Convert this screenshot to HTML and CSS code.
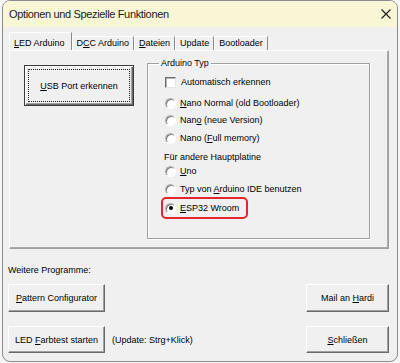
FILE: index.html
```html
<!DOCTYPE html>
<html lang="de">
<head>
    <meta charset="UTF-8">
    <meta name="viewport" content="width=device-width, initial-scale=1.0">
    <title>Optionen und Spezielle Funktionen</title>
    <link rel="stylesheet" href="styles.css">
</head>
<body>
    <div class="window">
        <div class="titlebar">
            <span class="title">Optionen und Spezielle Funktionen</span>
            <svg class="close" width="10" height="10" viewBox="0 0 10 10">
                <path d="M0.5 0.5 L9.5 9.5 M9.5 0.5 L0.5 9.5" stroke="#1b1b1b" stroke-width="1.1" fill="none"/>
            </svg>
        </div>

        <div class="client">
            <div class="tabs">
                <div class="tab active"><u>L</u>ED Arduino</div>
                <div class="tab">D<u>C</u>C Arduino</div>
                <div class="tab"><u>D</u>ateien</div>
                <div class="tab">Update</div>
                <div class="tab">Bootloader</div>
            </div>

            <div class="page">
                <button class="btn default usb"><u>U</u>SB Port erkennen</button>

                <fieldset class="group">
                    <legend>Arduino Typ</legend>
                    <div class="opt gap-6"><span class="check"></span>Automatisch erkennen</div>
                    <div class="opt gap-7"><span class="radio"></span><span><u>N</u>ano Normal (old Bootloader)</span></div>
                    <div class="opt gap-3"><span class="radio"></span><span>Nan<u>o</u> (neue Version)</span></div>
                    <div class="opt"><span class="radio"></span><span>Nano (<u>F</u>ull memory)</span></div>
                    <div class="opt gap-5">Für andere Hauptplatine</div>
                    <div class="opt gap-0"><span class="radio"></span><span><u>U</u>no</span></div>
                    <div class="opt"><span class="radio"></span><span>Typ von <u>A</u>rduino IDE benutzen</span></div>
                    <div class="mark">
                        <div class="opt gap-0"><span class="radio on"></span><span><u>E</u>SP32 Wroom</span></div>
                    </div>
                </fieldset>
            </div>

            <div class="section-label">Weitere Programme:</div>

            <div class="btn-row">
                <button class="btn wide"><u>P</u>attern Configurator</button>
                <button class="btn narrow push"><span>Mail an <u>H</u>ardi</span></button>
            </div>

            <div class="btn-row second">
                <button class="btn wide">LED <u>F</u>arbtest starten</button>
                <span class="hint">(Update: Strg+Klick)</span>
                <button class="btn narrow push"><u>S</u>chließen</button>
            </div>
        </div>
    </div>
</body>
</html>
```

FILE: styles.css
```css
* {
    box-sizing: border-box;
}

body {
    margin: 0;
    background: #f6f6f6;
    font-family: "Liberation Sans", Arial, sans-serif;
    font-size: 9px;
    color: #000;
}

.window {
    margin-left: 2px;
    width: 396px;
    height: 362px;
    border: 1px solid #8c8c8c;
    border-radius: 8px;
    background: #f0f0f0;
    overflow: hidden;
    display: flex;
    flex-direction: column;
}

.titlebar {
    height: 26px;
    flex: none;
    background: #f9f6d6;
    display: flex;
    align-items: center;
    justify-content: space-between;
    padding: 0 6px;
}

.title {
    font-family: "Liberation Sans", Arial, sans-serif;
    font-size: 11px;
    letter-spacing: -0.35px;
    color: #1a1a1a;
}

.client {
    flex: 1;
    padding: 0 8px 0 5px;
    display: flex;
    flex-direction: column;
}

/* tab strip */
.tabs {
    display: flex;
    align-items: flex-end;
    margin: 5px 0 0 1px;
    height: 18px;
}

.tab {
    padding: 0 4px 1px 4px;
    line-height: 12px;
    border-top: 1px solid #fff;
    border-left: 1px solid #fff;
    border-right: 1px solid #8a8a8a;
    white-space: nowrap;
}

.tab.active {
    padding: 4px 6px 1px 4px;
}

.page {
    margin-left: 1px;
    height: 199px;
    border: 1px solid;
    border-color: #fff #a0a0a0 #a0a0a0 #fff;
    box-shadow: inset -1px -1px 0 #a8a8a8;
    display: flex;
    align-items: flex-start;
    padding: 6px 0 0 14px;
}

/* buttons */
.btn {
    font: inherit;
    color: #000;
    background: #f0f0f0;
    border: 1px solid;
    border-color: #fff #6a6a6a #6a6a6a #fff;
    box-shadow: inset -1px -1px 0 #a0a0a0;
    padding: 0;
    height: 28px;
    white-space: nowrap;
}

.btn.default {
    border: 1px solid #3a3a3a;
    box-shadow: inset 1px 1px 0 #fff, inset -1px -1px 0 #6a6a6a, inset -2px -2px 0 #a0a0a0;
    outline: 1px dotted #222;
    outline-offset: -5px;
}

.usb {
    width: 110px;
    height: 41px;
    margin-top: 8px;
}

/* Arduino Typ frame */
.group {
    margin: 0 0 0 13px;
    width: 223px;
    height: 182px;
    border: 1px solid #a0a0a0;
    box-shadow: inset 1px 1px 0 #fff, 1px 1px 0 #fff;
    padding: 0 0 0 16px;
    min-width: 0;
}

.group legend {
    padding: 0 2px;
    margin-left: -5px;
    line-height: 12px;
}

.opt {
    display: flex;
    align-items: center;
    height: 14px;
    line-height: 14px;
    margin-top: 4px;
    white-space: nowrap;
}

.gap-0 { margin-top: 0; }
.gap-3 { margin-top: 3px; }
.gap-5 { margin-top: 5px; }
.gap-6 { margin-top: 6px; }
.gap-7 { margin-top: 7px; }

.check {
    width: 11px;
    height: 11px;
    margin: 0 5px 0 1px;
    background: #fff;
    border: 1px solid;
    border-color: #6e6e6e #e4e4e4 #e4e4e4 #6e6e6e;
    box-shadow: inset 1px 1px 0 #b4b4b4;
    flex: none;
}

.radio {
    width: 11px;
    height: 11px;
    margin: 0 4px 0 1px;
    border-radius: 50%;
    background: #fdfdfd;
    border: 1px solid;
    border-color: #b0b0b0 #fff #fff #b0b0b0;
    box-shadow: inset 1px 1px 0 #7a7a7a;
    display: flex;
    align-items: center;
    justify-content: center;
    flex: none;
}

.radio.on::after {
    content: "";
    width: 4px;
    height: 4px;
    border-radius: 50%;
    background: #000;
}

.mark {
    width: fit-content;
    margin: 1px 0 0 -3px;
    padding: 2px 7px 2px 1px;
    border: 2px solid #e3262d;
    border-radius: 5px;
}

/* lower part */
.section-label {
    margin-top: 14px;
    height: 14px;
    line-height: 14px;
}

.btn-row {
    display: flex;
    align-items: center;
    margin-top: 7px;
}

.btn-row.second {
    margin-top: 14px;
}

.btn-row.second .btn {
    height: 27px;
}

.wide {
    width: 97px;
}

.narrow {
    width: 83px;
}

.push {
    margin-left: auto;
}

.hint {
    margin-left: 7px;
}
```
